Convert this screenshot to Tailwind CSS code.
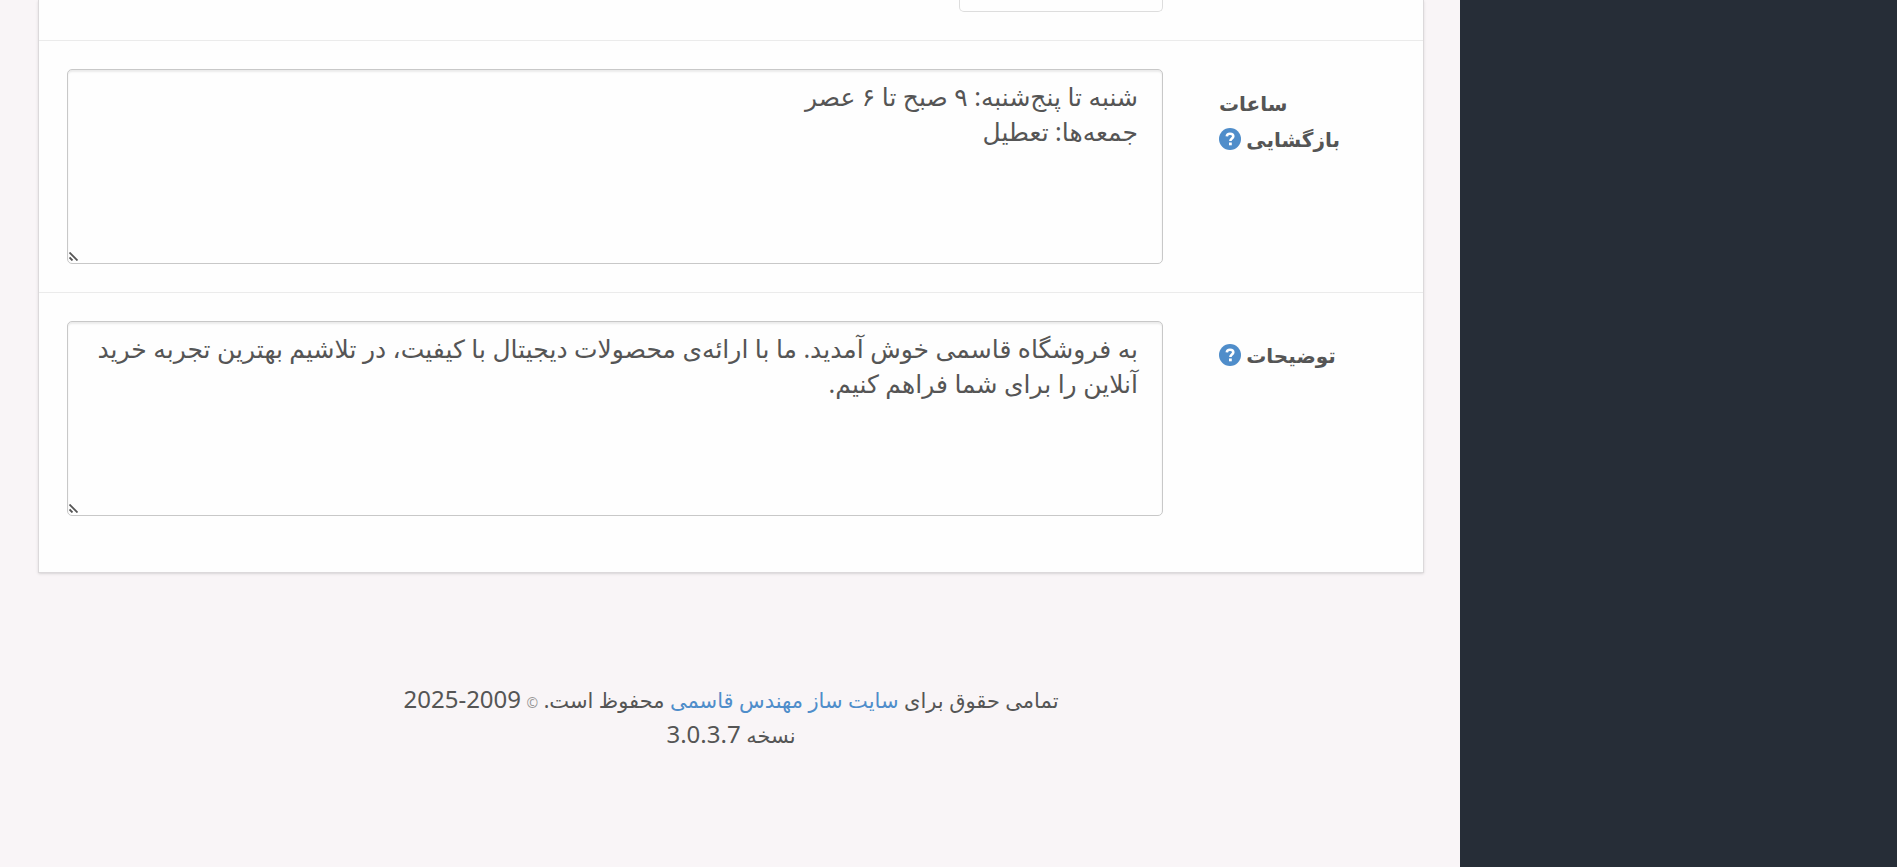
<!DOCTYPE html>
<html lang="fa" dir="rtl">
<head>
    <meta charset="UTF-8">
    <meta name="viewport" content="width=device-width, initial-scale=1.0">
    <script src="https://cdn.jsdelivr.net/npm/@tailwindcss/browser@4"></script>
    <title>تنظیمات فروشگاه</title>
</head>
<body class="bg-[#f9f5f7] text-[#555] font-['Noto_Sans','DejaVu_Sans',sans-serif]">
    <div class="flex min-h-screen">

        <aside class="w-[437px] shrink-0 bg-[#262d37]"></aside>

        <main class="flex-1 pr-9 pl-[38px]">
            <form class="bg-[#fefefe] border border-t-0 border-[#dcd9db] shadow-sm">

                <div class="flex px-7 pb-7 border-b border-[#ebebeb]">
                    <div class="w-44 ml-14 shrink-0"></div>
                    <input type="text" aria-label="فکس" class="h-3 w-[204px] border border-t-0 border-[#ddd] rounded-b-[5px] bg-[#fefefe]">
                </div>

                <div class="flex px-7 py-7 border-b border-[#ebebeb]">
                    <label for="open" class="w-44 ml-14 shrink-0 pt-[17px] pr-8 text-left text-[20px] leading-9 font-bold">ساعات بازگشایی
                        <svg class="inline size-[22px] align-[-3px]" viewBox="0 0 22 22">
                            <circle cx="11" cy="11" r="11" fill="#4f8dca"/>
                            <path d="M7.800 8.400C7.900 6.600 9.200 5.700 11 5.700c2 0 3.300 1 3.300 2.600 0 2.200-2.900 2.200-2.900 4.600" fill="none" stroke="#fff" stroke-width="2.600"/>
                            <rect x="10" y="14.500" width="2.800" height="2.800" fill="#fff"/>
                        </svg>
                    </label>
                    <div class="relative flex-1">
                        <textarea id="open" class="block w-full h-[195px] px-6 py-[9px] text-[25px] leading-[35px] border border-[#c8c8c8] rounded-[5px] bg-[#fefefe] shadow-[inset_0_2px_2px_rgba(0,0,0,0.08)] resize [&::-webkit-resizer]:bg-transparent">شنبه تا پنج‌شنبه: ۹ صبح تا ۶ عصر
جمعه‌ها: تعطیل</textarea>
                        <svg class="absolute bottom-[3px] left-[2px] size-[9px] pointer-events-none" viewBox="0 0 9 9" stroke="#555" stroke-width="1.800">
                            <path d="M0.500 0.500L8.500 8.500M0.500 5.500L3.500 8.500"/>
                        </svg>
                    </div>
                </div>

                <div class="flex px-7 pt-7 pb-14">
                    <label for="comment" class="w-44 ml-14 shrink-0 pt-[17px] pr-8 text-left text-[20px] leading-9 font-bold">توضیحات
                        <svg class="inline size-[22px] align-[-3px]" viewBox="0 0 22 22">
                            <circle cx="11" cy="11" r="11" fill="#4f8dca"/>
                            <path d="M7.800 8.400C7.900 6.600 9.200 5.700 11 5.700c2 0 3.300 1 3.300 2.600 0 2.200-2.900 2.200-2.900 4.600" fill="none" stroke="#fff" stroke-width="2.600"/>
                            <rect x="10" y="14.500" width="2.800" height="2.800" fill="#fff"/>
                        </svg>
                    </label>
                    <div class="relative flex-1">
                        <textarea id="comment" class="block w-full h-[195px] px-6 py-[9px] text-[25px] leading-[35px] border border-[#c8c8c8] rounded-[5px] bg-[#fefefe] shadow-[inset_0_2px_2px_rgba(0,0,0,0.08)] resize [&::-webkit-resizer]:bg-transparent">به فروشگاه قاسمی خوش آمدید. ما با ارائه‌ی محصولات دیجیتال با کیفیت، در تلاشیم بهترین تجربه خرید آنلاین را برای شما فراهم کنیم.</textarea>
                        <svg class="absolute bottom-[3px] left-[2px] size-[9px] pointer-events-none" viewBox="0 0 9 9" stroke="#555" stroke-width="1.800">
                            <path d="M0.500 0.500L8.500 8.500M0.500 5.500L3.500 8.500"/>
                        </svg>
                    </div>
                </div>

            </form>

            <footer class="pt-[110px] text-center text-[21px] leading-[35px]">
                <p>تمامی حقوق برای <a href="#" class="text-[#4f8dca]">سایت ساز مهندس قاسمی</a> محفوظ است. <span class="text-sm leading-none text-[#999]">©</span> <span class="text-2xl leading-none">2009-2025</span></p>
                <p>نسخه <span class="text-2xl leading-none">3.0.3.7</span></p>
            </footer>
        </main>

    </div>
</body>
</html>
